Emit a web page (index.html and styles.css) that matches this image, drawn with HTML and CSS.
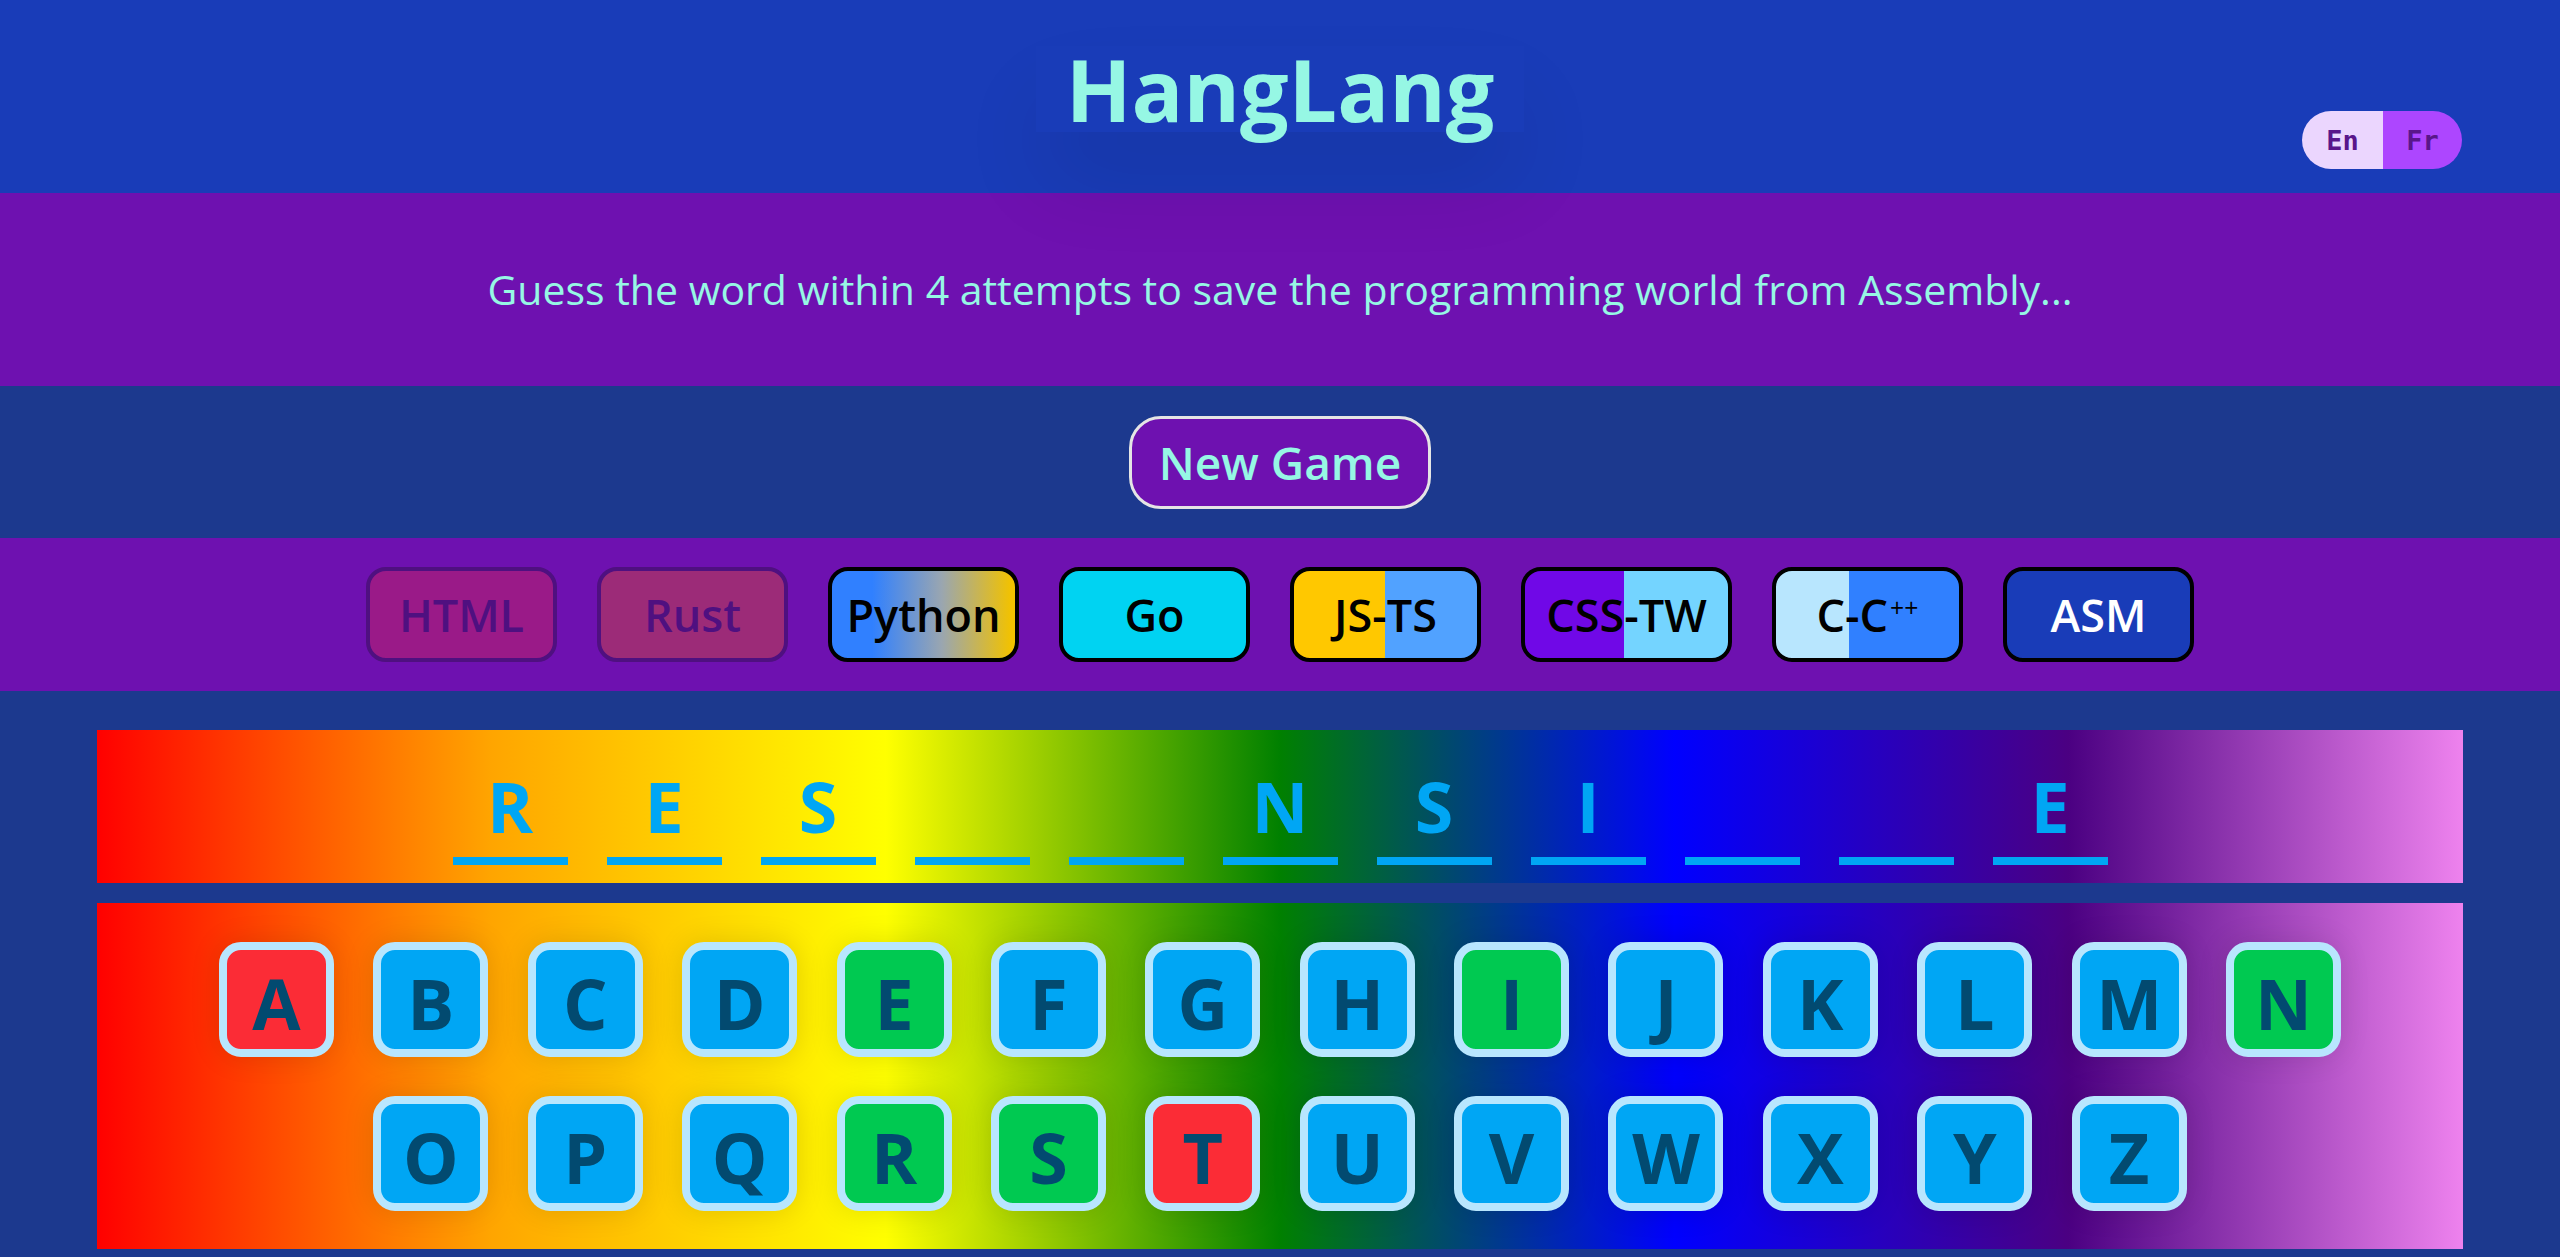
FILE: index.html
```html
<!DOCTYPE html>
<html lang="en">
<head>
<meta charset="utf-8">
<title>HangLang</title>
<link rel="stylesheet" href="styles.css">
</head>
<body>
<header class="top">
  <h1 class="title">HangLang</h1>
  <div class="lang">
    <button class="lang-btn lang-en">En</button>
    <button class="lang-btn lang-fr">Fr</button>
  </div>
</header>

<section class="intro">
  <p class="intro-text">Guess the word within 4 attempts to save the programming world from Assembly...</p>
</section>

<section class="controls">
  <button class="new-game">New Game</button>
</section>

<section class="langs">
  <span class="chip chip-html">HTML</span>
  <span class="chip chip-rust">Rust</span>
  <span class="chip chip-python">Python</span>
  <span class="chip chip-go">Go</span>
  <span class="chip chip-js">JS-TS</span>
  <span class="chip chip-css">CSS-TW</span>
  <span class="chip chip-c">C-C<span class="plus">++</span></span>
  <span class="chip chip-asm">ASM</span>
</section>

<main class="board">
  <div class="word">
    <span class="slot">R</span>
    <span class="slot">E</span>
    <span class="slot">S</span>
    <span class="slot"></span>
    <span class="slot"></span>
    <span class="slot">N</span>
    <span class="slot">S</span>
    <span class="slot">I</span>
    <span class="slot"></span>
    <span class="slot"></span>
    <span class="slot">E</span>
  </div>
  <div class="keyboard">
    <button class="key key-wrong">A</button>
    <button class="key">B</button>
    <button class="key">C</button>
    <button class="key">D</button>
    <button class="key key-right">E</button>
    <button class="key">F</button>
    <button class="key">G</button>
    <button class="key">H</button>
    <button class="key key-right">I</button>
    <button class="key">J</button>
    <button class="key">K</button>
    <button class="key">L</button>
    <button class="key">M</button>
    <button class="key key-right">N</button>
    <button class="key">O</button>
    <button class="key">P</button>
    <button class="key">Q</button>
    <button class="key key-right">R</button>
    <button class="key key-right">S</button>
    <button class="key key-wrong">T</button>
    <button class="key">U</button>
    <button class="key">V</button>
    <button class="key">W</button>
    <button class="key">X</button>
    <button class="key">Y</button>
    <button class="key">Z</button>
  </div>
</main>
</body>
</html>
```

FILE: styles.css
```css
* { box-sizing: border-box; }

html, body {
  margin: 0;
  padding: 0;
}

body {
  background: #1c398e;
  font-family: "Open Sans", "Noto Sans", sans-serif;
  color: #96f7e4;
  padding-bottom: 40px;
}

button {
  font-family: inherit;
  cursor: pointer;
}

/* Header */
.top {
  position: relative;
  height: 193px;
  background: #193cb8;
  display: flex;
  justify-content: center;
  align-items: flex-start;
  padding-top: 46px;
}

.title {
  position: relative;
  z-index: 1;
  margin: 0;
  padding: 0 30px;
  font-size: 86px;
  line-height: 1;
  font-weight: 700;
  color: #96f7e4;
  box-shadow: 0 50px 90px -10px rgba(0, 0, 0, 0.12);
}

.lang {
  position: absolute;
  top: 111px;
  right: 98px;
  display: flex;
  width: 160px;
  height: 58px;
  border-radius: 29px;
  overflow: hidden;
}

.lang-btn {
  border: 0;
  margin: 0;
  padding: 0;
  height: 100%;
  font-family: "DejaVu Sans Mono", monospace;
  font-weight: 700;
  font-size: 27px;
  color: #59168b;
}

.lang-en {
  width: 81px;
  background: #ebd6fe;
}

.lang-fr {
  width: 79px;
  background: #ad46ff;
}

/* Intro */
.intro {
  position: relative;
  height: 193px;
  background: #6e11b0;
  display: flex;
  align-items: center;
  justify-content: center;
}

.intro-text {
  margin: 0;
  font-size: 41px;
  line-height: 1.2;
  color: #96f7e4;
}

/* Controls */
.controls {
  height: 152px;
  display: flex;
  align-items: center;
  justify-content: center;
}

.new-game {
  height: 93px;
  padding: 0 27px;
  border: 3px solid #e5e5e5;
  border-radius: 32px;
  background: #6e11b0;
  color: #96f7e4;
  font-size: 46px;
  font-weight: 600;
}

/* Language chips */
.langs {
  height: 153px;
  background: #6e11b0;
  display: flex;
  align-items: center;
  justify-content: center;
  gap: 40px;
}

.chip {
  min-width: 191px;
  height: 95px;
  padding: 0 10px;
  border: 4px solid #000;
  border-radius: 20px;
  display: flex;
  align-items: center;
  justify-content: center;
  font-size: 45px;
  font-weight: 600;
  color: #000;
  white-space: nowrap;
}

.chip-html {
  background: #9a1a88;
  border-color: #4f1080;
  color: #4f1080;
}

.chip-rust {
  background: #9c2b78;
  border-color: #4f1080;
  color: #4f1080;
}

.chip-python {
  background: linear-gradient(90deg, #3080ff 22%, #9aa6b0 60%, #f2c200 98%);
}

.chip-go {
  background: #00d3f2;
}

.chip-js {
  background: linear-gradient(90deg, #ffc800 50%, #51a2ff 50%);
}

.chip-css {
  min-width: 211px;
  background: linear-gradient(90deg, #7008e7 49%, #74d4ff 49%);
}

.chip-c {
  background: linear-gradient(90deg, #b8e6fe 40%, #3080ff 40%);
}

.plus {
  font-size: 0.55em;
  font-weight: 500;
  margin-left: 2px;
  position: relative;
  top: -0.3em;
}

.chip-asm {
  background: #193cb8;
  color: #fff;
}

/* Board */
.board {
  margin: 39px 97px 0;
  display: flex;
  flex-direction: column;
  gap: 20px;
}

.word,
.keyboard {
  background: linear-gradient(90deg, red, orange, yellow, green, blue, indigo, violet);
}

.word {
  height: 153px;
  padding-top: 41px;
  display: flex;
  justify-content: center;
  align-items: flex-start;
  gap: 39px;
}

.slot {
  width: 115px;
  height: 94px;
  padding-bottom: 16px;
  border-bottom: 8px solid #00a6f4;
  display: flex;
  align-items: flex-end;
  justify-content: center;
  font-size: 70px;
  line-height: 1;
  font-weight: 700;
  color: #00a6f4;
}

.keyboard {
  padding: 39px 80px 38px;
  display: flex;
  flex-wrap: wrap;
  justify-content: center;
  gap: 39px 39.4px;
}

.key {
  width: 115px;
  height: 115px;
  margin: 0;
  padding: 6px 0 0;
  border: 8px solid #b8e6fe;
  border-radius: 22px;
  background: #00a6f4;
  color: #024a70;
  font-size: 70px;
  font-weight: 700;
  line-height: 1;
  display: flex;
  align-items: center;
  justify-content: center;
  box-shadow: 0 0 30px rgba(0, 0, 0, 0.12);
}

.key-right {
  background: #00c951;
}

.key-wrong {
  background: #fb2c36;
}
```
